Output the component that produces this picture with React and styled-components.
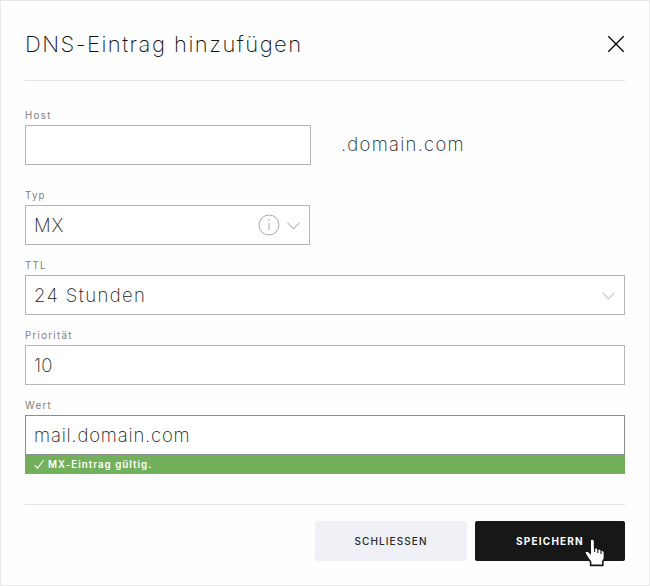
import React from 'react';
import styled, { createGlobalStyle } from 'styled-components';

const GlobalStyle = createGlobalStyle`
  *, *::before, *::after { box-sizing: border-box; }
  body { margin: 0; background: #fff; font-family: Inter, "Liberation Sans", sans-serif; color: #222; }
  button, input { font: inherit; color: inherit; }
`;

const Dialog = styled.main`
  width: 650px;
  height: 586px;
  border: 1px solid #e9e9e9;
  padding: 0 24px;
  background: #fefefe;
  display: flex;
  flex-direction: column;
`;

const Header = styled.header`
  height: 80px;
  border-bottom: 1px solid #e2e2e2;
  display: flex;
  align-items: center;
  justify-content: space-between;
  padding-top: 7px;
`;

const Title = styled.h1`
  margin: 0;
  color: #111;
  font-size: 22px;
  line-height: 30px;
  font-weight: 200;
  letter-spacing: ${(p) => p.$spacing}px;
  white-space: nowrap;
`;

const CloseButton = styled.button`
  border: 0;
  background: none;
  padding: 0;
  width: 18px;
  height: 18px;
  display: flex;
`;

const Form = styled.form`
  height: 423px;
  padding-top: 29px;
  display: flex;
  flex-direction: column;
`;

const Field = styled.div`
  width: ${(p) => p.$width || 600}px;
  height: 70px;
  flex: none;
`;

const Label = styled.label`
  display: block;
  height: 15px;
  line-height: 12px;
  font-size: 9.75px;
  color: #808080;
  letter-spacing: ${(p) => p.$spacing}px;
`;

const Control = styled.div`
  height: 40px;
  border: 1px solid ${(p) => (p.$active ? '#8e8e90' : '#b5b5b7')};
  background: #fff;
  display: flex;
  align-items: center;
  padding: 0 9px 0 8px;
`;

const Value = styled.span`
  flex: 1;
  font-size: 18.5px;
  line-height: 24px;
  padding-bottom: 1px;
  font-weight: 200;
  letter-spacing: ${(p) => p.$spacing || 0}px;
  white-space: nowrap;
`;

const HostRow = styled.div`
  display: flex;
  height: 80px;
`;

const Suffix = styled(Value)`
  margin: 22px 0 0 30px;
`;

const InfoIcon = styled.svg`
  margin-right: 7px;
  margin-top: -1px;
`;

const ChevronIcon = styled.svg`
  margin-top: 2px;
`;

const Message = styled.div`
  height: 19px;
  background: #72b05c;
  color: #fff;
  display: flex;
  align-items: center;
  gap: 3px;
  padding: 0 0 1px 9px;
  font-size: 9.75px;
  font-weight: 600;
  letter-spacing: ${(p) => p.$spacing}px;
`;

const Footer = styled.footer`
  border-top: 1px solid #e2e2e2;
  padding-top: 16px;
  display: flex;
  justify-content: flex-end;
  gap: 8px;
`;

const Button = styled.button`
  position: relative;
  width: ${(p) => p.$width}px;
  height: 40px;
  padding: 0 0 1px;
  border: 0;
  border-radius: 2px;
  background: ${(p) => (p.$primary ? '#171718' : '#f0f1f6')};
  color: ${(p) => (p.$primary ? '#fff' : '#27272c')};
  font-size: 10px;
  font-weight: ${(p) => (p.$primary ? 700 : 500)};
  letter-spacing: ${(p) => p.$spacing}px;
`;

const Pointer = styled.svg`
  position: absolute;
  left: 109px;
  top: 17px;
`;

const Chevron = ({ color = '#b8b8b8', strokeWidth = 1.1 }) => (
  <ChevronIcon width="13" height="8" viewBox="0 0 13 8" fill="none" stroke={color} strokeWidth={strokeWidth}>
    <path d="M.5 .7 6.5 6.7 12.5 .7" />
  </ChevronIcon>
);

export default function App() {
  return (
    <>
      <GlobalStyle />
      <Dialog>
        <Header>
          <Title $spacing={1.47}>DNS-Eintrag hinzufügen</Title>
          <CloseButton aria-label="Schließen">
            <svg width="18" height="18" viewBox="0 0 18 18" stroke="#000" strokeWidth="1.3">
              <path d="M1.3 1.3 16.7 16.7M16.7 1.3 1.3 16.7" />
            </svg>
          </CloseButton>
        </Header>
        <Form>
          <HostRow>
            <Field $width={286}>
              <Label $spacing={1.3}>Host</Label>
              <Control />
            </Field>
            <Suffix $spacing={1.25}>.domain.com</Suffix>
          </HostRow>
          <Field $width={285}>
            <Label $spacing={1.2}>Typ</Label>
            <Control>
              <Value $spacing={0.8}>MX</Value>
              <InfoIcon width="22" height="22" viewBox="0 0 22 22" fill="none" stroke="#aaa">
                <circle cx="11" cy="11" r="10" />
                <path d="M11 9v7" />
                <path d="M11 5.5v1.4" strokeWidth="1.4" />
              </InfoIcon>
              <Chevron />
            </Control>
          </Field>
          <Field>
            <Label $spacing={1.2}>TTL</Label>
            <Control>
              <Value $spacing={1.4}>24 Stunden</Value>
              <Chevron color="#d0d0d0" strokeWidth={1.6} />
            </Control>
          </Field>
          <Field>
            <Label $spacing={1.25}>Priorität</Label>
            <Control>
              <Value $spacing={0.2}>10</Value>
            </Control>
          </Field>
          <Field>
            <Label $spacing={1.3}>Wert</Label>
            <Control $active>
              <Value $spacing={0.8}>mail.domain.com</Value>
            </Control>
            <Message $spacing={1.02}>
              <svg width="11" height="11" viewBox="0 0 11 11" fill="none" stroke="#fff" strokeWidth="1.1">
                <path d="M.7 6.2 3.5 9.3 9.7 1" />
              </svg>
              MX-Eintrag gültig.
            </Message>
          </Field>
        </Form>
        <Footer>
          <Button $width={152} $spacing={1.1}>SCHLIESSEN</Button>
          <Button $width={150} $primary $spacing={1.2}>
            SPEICHERN
            <Pointer width="22" height="30" viewBox="0 0 22 30">
              <path
                d="M7 1h2.4l1.2 1.8v7h2.2l1.2 1.2h2.2l1.2 1.2h1.6l1.4 1.8v6.6l-1.6 3.2v3.6H6.6v-3.4L3.4 19.5 1 15.4v-2.2H4L6.2 15V2z"
                fill="#fff"
                stroke="#171718"
                strokeWidth="1.6"
              />
              <path d="M10.6 9v5M13.8 11v4M17 12.5V16" fill="none" stroke="#171718" strokeWidth="1.1" />
            </Pointer>
          </Button>
        </Footer>
      </Dialog>
    </>
  );
}
